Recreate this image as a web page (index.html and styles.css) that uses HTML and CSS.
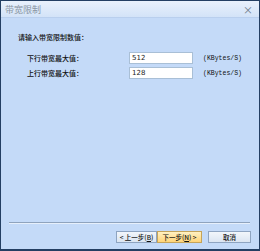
FILE: index.html
```html
<!DOCTYPE html>
<html lang="zh-CN">
<head>
    <meta charset="UTF-8">
    <title>带宽限制</title>
    <link rel="stylesheet" href="styles.css">
</head>
<body>

    <div class="dialog">
        <div class="titlebar">
            <span class="title">带宽限制</span>
            <span class="close">×</span>
        </div>

        <div class="content">
            <div class="prompt">请输入带宽限制数值：</div>
            <div class="row">
                <span class="label">下行带宽最大值：</span>
                <input class="field" type="text" value="512">
                <span class="unit">(KBytes/S)</span>
            </div>
            <div class="row">
                <span class="label">上行带宽最大值：</span>
                <input class="field" type="text" value="128">
                <span class="unit">(KBytes/S)</span>
            </div>
        </div>

        <div class="separator"></div>

        <div class="buttons">
            <button class="btn">&lt; 上一步(<u>B</u>)</button>
            <button class="btn btn-active">下一步(<u>N</u>) &gt;</button>
            <button class="btn btn-cancel">取消</button>
        </div>
    </div>

</body>
</html>
```

FILE: styles.css
```css
body {
    margin: 0;
    font-family: "Noto Sans CJK SC", "DejaVu Sans", sans-serif;
    color: #111;
}

.dialog {
    width: 260px;
    height: 251px;
    box-sizing: border-box;
    border: 1px solid #243f63;
    border-bottom-width: 2px;
    background-color: #c4daf8;
    display: flex;
    flex-direction: column;
}

.titlebar {
    height: 16px;
    display: flex;
    align-items: center;
    justify-content: space-between;
    padding: 0 6px 0 4px;
    background: linear-gradient(#e9f1fc, #d3e3f8);
    border-bottom: 1px solid #b9cfee;
}

.title {
    font-size: 9px;
    color: #8a95a3;
}

.close {
    font-size: 10px;
    color: #6b7888;
}

.content {
    padding: 14px 0 0 17px;
    font-size: 7px;
    font-weight: 500;
}

.prompt {
    margin-bottom: 9px;
}

.row {
    display: flex;
    align-items: center;
    height: 14px;
    margin-bottom: 1px;
}

.label {
    width: 102px;
    padding-left: 9px;
}

.field {
    width: 64px;
    height: 12px;
    box-sizing: border-box;
    margin: 0;
    padding: 0 2px;
    border: 1px solid #a9bfd6;
    background-color: #ffffff;
    font-family: "DejaVu Sans", sans-serif;
    font-size: 7px;
    color: #222;
}

.unit {
    margin-left: 10px;
    font-family: "Liberation Mono", monospace;
    font-size: 6.5px;
}

.separator {
    margin: auto 9px 0 8px;
    height: 0;
    border-top: 1px solid #8fa3bd;
    border-bottom: 1px solid #e6effb;
}

.buttons {
    display: flex;
    justify-content: flex-end;
    padding: 7px 8px 6px 0;
}

.btn {
    width: 41px;
    height: 12px;
    margin: 0;
    padding: 0;
    font-family: "Noto Sans CJK SC", sans-serif;
    font-size: 6.5px;
    font-weight: 500;
    line-height: 10px;
    color: #111;
    border: 1px solid #8ea4c1;
    background: linear-gradient(#f2f6fb, #dbe5f2);
}

.btn-active {
    width: 45px;
    border-color: #c5a45a;
    background: linear-gradient(#fff1c2, #ffd477);
}

.btn-cancel {
    width: 43px;
    margin-left: 6px;
}
```
